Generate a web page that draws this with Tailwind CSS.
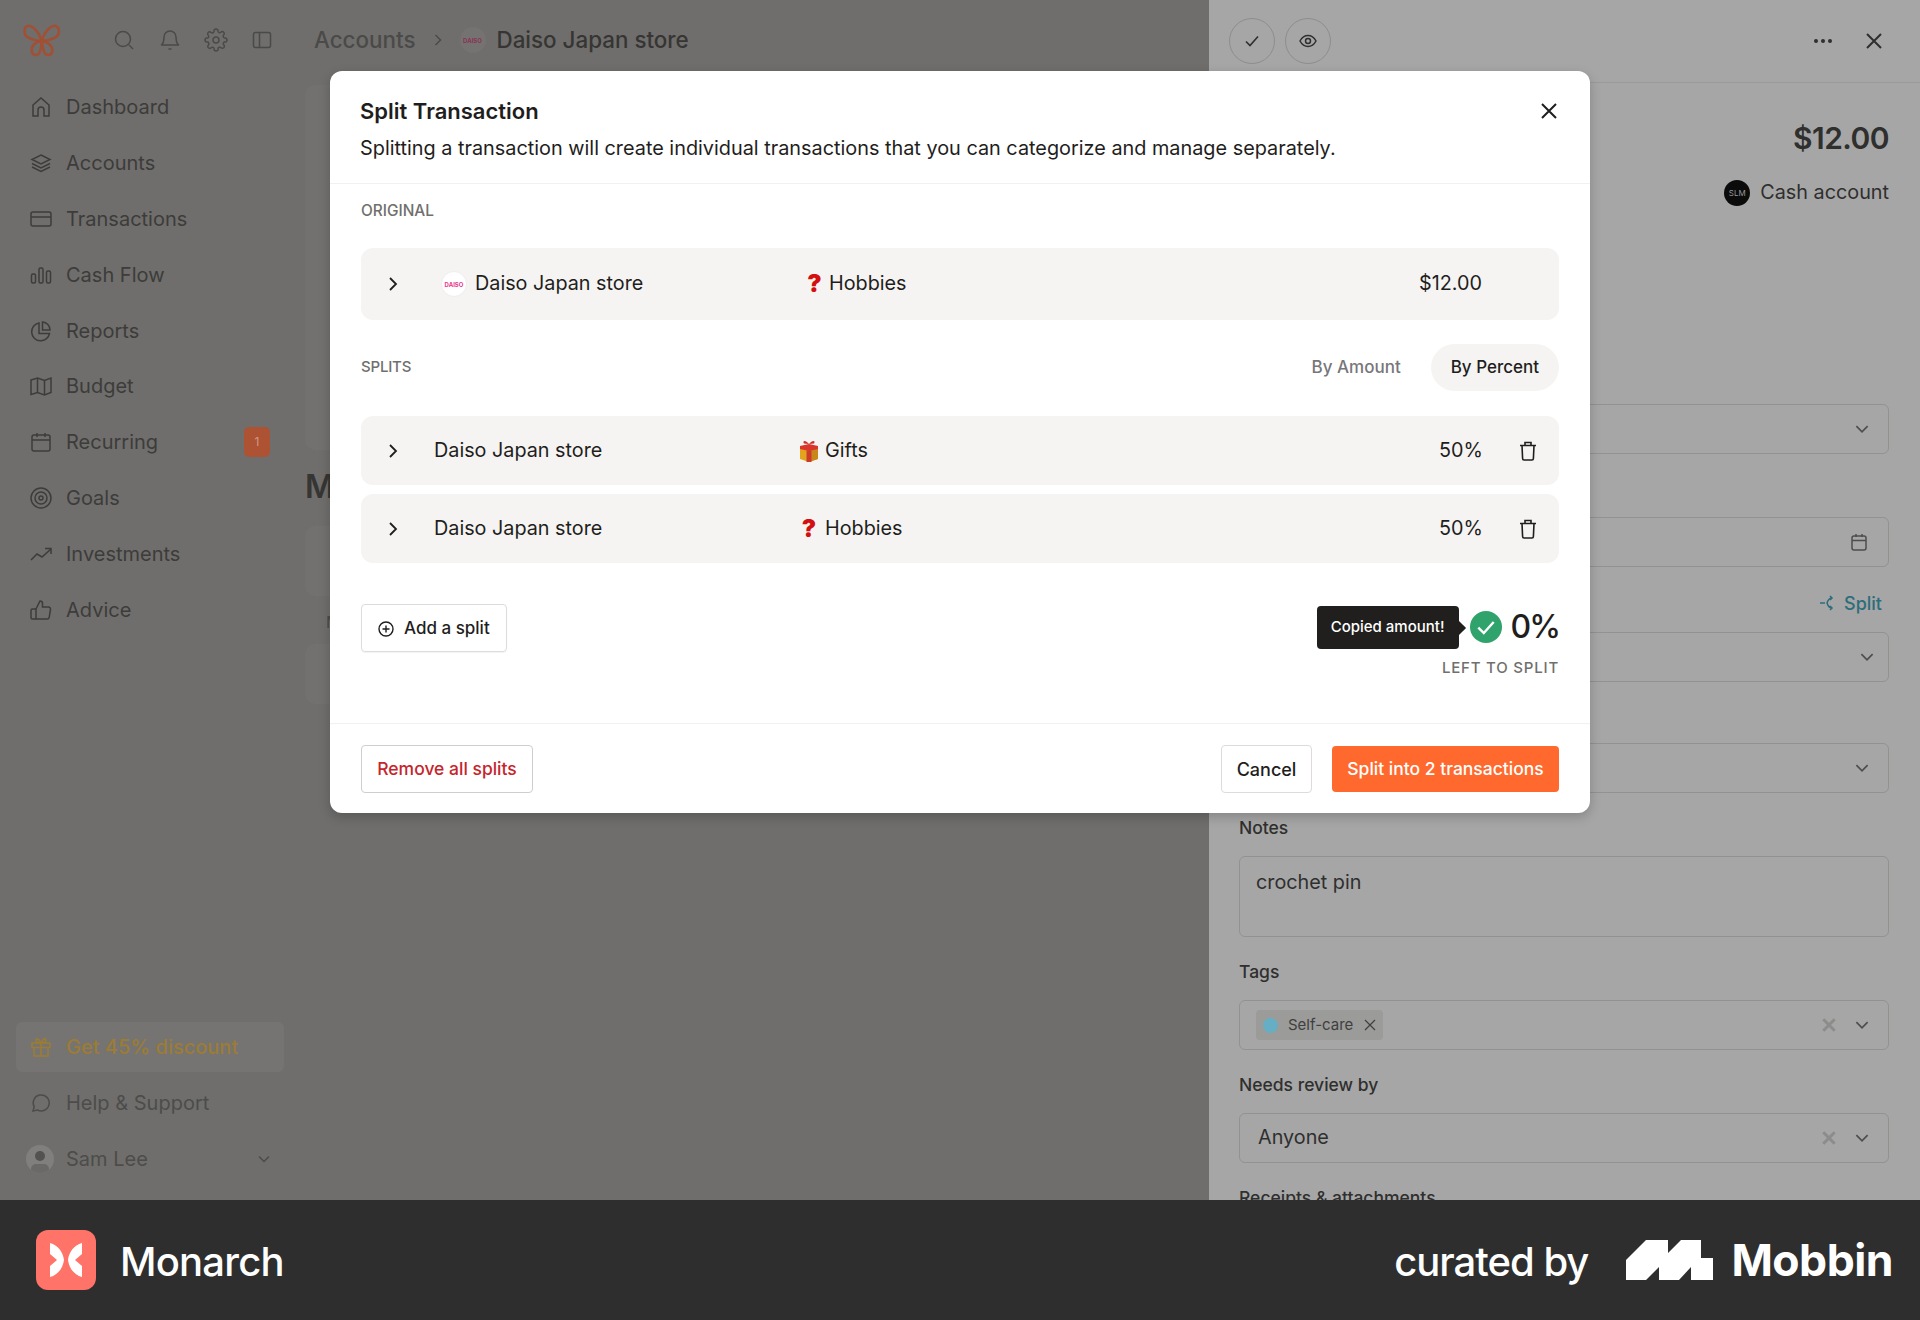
<!DOCTYPE html>
<html lang="en">
<head>
  <meta charset="UTF-8">
  <title>Monarch - Split Transaction</title>
  <script src="https://cdn.jsdelivr.net/npm/@tailwindcss/browser@4"></script>
</head>
<body class="m-0 bg-[#2e2e2e] font-['Inter',sans-serif]">
<div class="relative w-[1920px] h-[1320px] overflow-hidden">

  <!-- App behind the dialog -->
  <div class="flex h-[1200px] overflow-hidden bg-[#6f6e6c]">

    <!-- Sidebar -->
    <aside class="w-[305px] shrink-0 flex flex-col text-[20px] text-[#3d3c3a]">
      <div class="h-[79px] flex items-center pl-[15px]">
        <svg class="w-[55px] h-[50px]" viewBox="0 0 165 150" fill="none" stroke="#a24f33" stroke-width="7.500">
          <path d="M80 78C70 45 50 30 38 33C25 37 25 60 40 68C55 76 70 78 80 78C90 45 110 30 122 33C135 37 135 60 120 68C105 76 90 78 80 78Z"/>
          <path d="M80 78C60 80 48 95 50 108C52 122 68 125 74 112C78 102 80 90 80 78C82 90 84 102 88 112C94 125 110 122 112 108C114 95 100 80 80 78Z"/>
        </svg>
        <div class="flex items-center ml-[42px] gap-[22px] text-[#4a4a48]">
          <svg class="w-[24px] h-[24px]" viewBox="0 0 24 24" fill="none" stroke="currentColor" stroke-width="1.500"><circle cx="11" cy="11" r="7.500"/><path d="M17 17l4 4"/></svg>
          <svg class="w-[24px] h-[24px]" viewBox="0 0 24 24" fill="none" stroke="currentColor" stroke-width="1.500"><path d="M6 9a6 6 0 0 1 12 0c0 7 3 8 3 8H3s3-1 3-8"/><path d="M10.500 21h3"/></svg>
          <svg class="w-[24px] h-[24px]" viewBox="0 0 24 24" fill="none" stroke="currentColor" stroke-width="1.500"><circle cx="12" cy="12" r="3"/><path d="M19.400 15a1.650 1.650 0 0 0 .33 1.820l.06.06a2 2 0 1 1-2.830 2.830l-.06-.06a1.650 1.650 0 0 0-2.820 1.170V21a2 2 0 0 1-4 0v-.09a1.650 1.650 0 0 0-2.800-1.170l-.06.06a2 2 0 1 1-2.830-2.830l.06-.06a1.650 1.650 0 0 0-1.170-2.800H3a2 2 0 0 1 0-4h.09a1.650 1.650 0 0 0 1.170-2.800l-.06-.06a2 2 0 1 1 2.830-2.830l.06.06a1.650 1.650 0 0 0 1.820.33H9a1.650 1.650 0 0 0 1-1.510V3a2 2 0 0 1 4 0v.09a1.650 1.650 0 0 0 2.800 1.170l.06-.06a2 2 0 1 1 2.830 2.830l-.06.06a1.650 1.650 0 0 0-.33 1.820V9a1.650 1.650 0 0 0 1.510 1H21a2 2 0 0 1 0 4h-.09a1.650 1.650 0 0 0-1.510 1Z"/></svg>
          <svg class="w-[24px] h-[24px]" viewBox="0 0 24 24" fill="none" stroke="currentColor" stroke-width="1.500"><rect x="3.500" y="4.500" width="17" height="15" rx="2"/><path d="M9.500 4.500v15"/></svg>
        </div>
      </div>

      <nav class="flex flex-col pl-[29px] pr-[35px]">
        <a class="h-[55.900px] flex items-center gap-[13px]">
          <svg class="w-[24px] h-[24px]" viewBox="0 0 24 24" fill="none" stroke="currentColor" stroke-width="1.500"><path d="M4 21V10l8-7 8 7v11h-5v-6a3 3 0 0 0-6 0v6H4Z"/></svg>
          Dashboard
        </a>
        <a class="h-[55.900px] flex items-center gap-[13px]">
          <svg class="w-[24px] h-[24px]" viewBox="0 0 24 24" fill="none" stroke="currentColor" stroke-width="1.500"><path d="M12 4l9 4.500-9 4.500-9-4.500L12 4Z"/><path d="M3 12.500l9 4.500 9-4.500"/><path d="M3 16l9 4.500 9-4.500"/></svg>
          Accounts
        </a>
        <a class="h-[55.900px] flex items-center gap-[13px]">
          <svg class="w-[24px] h-[24px]" viewBox="0 0 24 24" fill="none" stroke="currentColor" stroke-width="1.500"><rect x="2" y="5" width="20" height="14" rx="2"/><path d="M2 10h20"/></svg>
          Transactions
        </a>
        <a class="h-[55.900px] flex items-center gap-[13px]">
          <svg class="w-[24px] h-[24px]" viewBox="0 0 24 24" fill="none" stroke="currentColor" stroke-width="1.500"><rect x="2.500" y="11" width="4" height="9" rx="1.500"/><rect x="10" y="5" width="4" height="15" rx="1.500"/><rect x="17.500" y="8" width="4" height="12" rx="1.500"/></svg>
          Cash Flow
        </a>
        <a class="h-[55.900px] flex items-center gap-[13px]">
          <svg class="w-[24px] h-[24px]" viewBox="0 0 24 24" fill="none" stroke="currentColor" stroke-width="1.500"><path d="M10 4a9 9 0 1 0 10.500 10.500H10V4Z"/><path d="M13.500 3a8 8 0 0 1 7.500 8h-7.500V3Z"/></svg>
          Reports
        </a>
        <a class="h-[55.900px] flex items-center gap-[13px]">
          <svg class="w-[24px] h-[24px]" viewBox="0 0 24 24" fill="none" stroke="currentColor" stroke-width="1.500"><path d="M2 6l6.500-2 7 2.500L22 4v14.500L15.500 21l-7-2.500L2 20.500V6Z"/><path d="M8.500 4v14.500M15.500 6.500V21"/></svg>
          Budget
        </a>
        <a class="h-[55.900px] flex items-center gap-[13px]">
          <svg class="w-[24px] h-[24px]" viewBox="0 0 24 24" fill="none" stroke="currentColor" stroke-width="1.500"><rect x="3" y="5" width="18" height="16" rx="2"/><path d="M3 10h18M8 3v4M16 3v4"/></svg>
          <span class="flex-1">Recurring</span>
          <span class="w-[26px] h-[30px] rounded-[5px] bg-[#ad5233] text-[#cf9a85] text-[12px] flex items-center justify-center">1</span>
        </a>
        <a class="h-[55.900px] flex items-center gap-[13px]">
          <svg class="w-[24px] h-[24px]" viewBox="0 0 24 24" fill="none" stroke="currentColor" stroke-width="1.500"><circle cx="12" cy="12" r="10"/><circle cx="12" cy="12" r="6"/><circle cx="12" cy="12" r="2"/></svg>
          Goals
        </a>
        <a class="h-[55.900px] flex items-center gap-[13px]">
          <svg class="w-[24px] h-[24px]" viewBox="0 0 24 24" fill="none" stroke="currentColor" stroke-width="1.500"><path d="M2 18l6-6 5 3 9-8"/><path d="M16 6.500h6V12"/></svg>
          Investments
        </a>
        <a class="h-[55.900px] flex items-center gap-[13px]">
          <svg class="w-[24px] h-[24px]" viewBox="0 0 24 24" fill="none" stroke="currentColor" stroke-width="1.500"><path d="M7 11l4-8a2.500 2.500 0 0 1 2.500 2.500V9h6a2 2 0 0 1 2 2.300l-1.300 8a2 2 0 0 1-2 1.700H7V11Z"/><path d="M7 11H3.500a1.500 1.500 0 0 0-1.500 1.500v7A1.500 1.500 0 0 0 3.500 21H7"/></svg>
          Advice
        </a>
      </nav>

      <div class="mt-auto pb-[16px] flex flex-col">
        <a class="ml-[16px] mr-[21px] pl-[13px] h-[50px] rounded-[6px] bg-[#757472] text-[#9c7c35] font-medium flex items-center gap-[13px]">
          <svg class="w-[24px] h-[24px]" viewBox="0 0 24 24" fill="none" stroke="currentColor" stroke-width="1.500"><rect x="3" y="8" width="18" height="4.500"/><path d="M5 12.500V21h14v-8.500M12 8v13"/><path d="M12 8C9 8 7 6.500 7 4.800S9.500 2.500 12 8c2.500-5.500 5-4.900 5-3.200S15 8 12 8Z"/></svg>
          Get 45% discount
        </a>
        <a class="mt-[6px] pl-[29px] h-[50px] text-[#4d4c4a] flex items-center gap-[13px]">
          <svg class="w-[24px] h-[24px]" viewBox="0 0 24 24" fill="none" stroke="currentColor" stroke-width="1.500"><path d="M4 20l1.200-4.200A8 8 0 1 1 8.500 19L4 20Z"/></svg>
          Help &amp; Support
        </a>
        <div class="mt-[6px] pl-[26px] pr-[33px] h-[50px] text-[#4d4c4a] flex items-center">
          <span class="relative w-[28px] h-[28px] rounded-full bg-[#807f7d] overflow-hidden mr-[12px]">
            <span class="absolute left-[9px] top-[6px] w-[10px] h-[10px] rounded-full bg-[#535250]"></span>
            <span class="absolute left-[5px] top-[19px] w-[18px] h-[10px] rounded-full bg-[#6a6967]"></span>
          </span>
          <span class="flex-1">Sam Lee</span>
          <svg class="w-[16px] h-[16px]" viewBox="0 0 16 16" fill="none" stroke="currentColor" stroke-width="1.500"><path d="M3 5.500l5 5 5-5"/></svg>
        </div>
      </div>
    </aside>

    <!-- Main column, mostly covered by the dialog -->
    <main class="w-[904px] shrink-0 flex flex-col relative">
      <div class="h-[80px] flex items-center pl-[9px] text-[22.400px] font-medium text-[#4a4a48]">
        Accounts
        <svg class="w-[16px] h-[16px] mx-[14px]" viewBox="0 0 16 16" fill="none" stroke="currentColor" stroke-width="1.500"><path d="M5.500 3l5 5-5 5"/></svg>
        <span class="w-[26px] h-[26px] rounded-full bg-[#747371] mr-[11px] flex items-center justify-center text-[6px] font-bold text-[#8a3355]">DAISO</span>
        <span class="text-[#363533]">Daiso Japan store</span>
      </div>
      <div class="h-[365px] mt-[5px] rounded-[10px] bg-[#72716f]"></div>
      <div class="mt-[17px] text-[32px] leading-[40px] font-semibold text-[#363533]">M</div>
      <div class="mt-[19px] h-[70px] rounded-[10px] bg-[#72716f]"></div>
      <div class="mt-[14px] ml-[21px] text-[16px] text-[#4a4a48]">M</div>
      <div class="mt-[10px] h-[60px] rounded-[10px] bg-[#72716f]"></div>
    </main>

    <!-- Transaction drawer -->
    <section class="flex-1 bg-[#a6a6a6] text-[#2f2f2e] text-[19.800px] flex flex-col">
      <div class="h-[83px] shrink-0 border-b border-[#9a9a99] flex items-center pl-[20px] pr-[34px]">
        <span class="w-[46px] h-[46px] rounded-full border border-[#8d8d8c] flex items-center justify-center">
          <svg class="w-[20px] h-[20px]" viewBox="0 0 20 20" fill="none" stroke="currentColor" stroke-width="1.600"><path d="M4 10.500l4 4 8-9"/></svg>
        </span>
        <span class="ml-[10px] w-[46px] h-[46px] rounded-full border border-[#8d8d8c] flex items-center justify-center">
          <svg class="w-[20px] h-[20px]" viewBox="0 0 20 20" fill="none" stroke="currentColor" stroke-width="1.500"><path d="M2 10s3-5.500 8-5.500 8 5.500 8 5.500-3 5.500-8 5.500S2 10 2 10Z"/><circle cx="10" cy="10" r="2.500"/></svg>
        </span>
        <svg class="ml-auto w-[24px] h-[24px]" viewBox="0 0 24 24" fill="currentColor"><circle cx="5" cy="12" r="2"/><circle cx="12" cy="12" r="2"/><circle cx="19" cy="12" r="2"/></svg>
        <svg class="ml-[27px] w-[24px] h-[24px]" viewBox="0 0 24 24" fill="none" stroke="currentColor" stroke-width="2"><path d="M5 5l14 14M19 5L5 19"/></svg>
      </div>

      <div class="pl-[30px] pr-[31px] flex flex-col">
        <div class="mt-[35px] text-right text-[30px] tracking-[-0.550px] leading-[40px] font-semibold">$12.00</div>
        <div class="mt-[19px] h-[32px] flex items-center justify-end gap-[10px]">
          <span class="w-[26px] h-[26px] rounded-full bg-[#0b0b0b] text-[#999] text-[8px] flex items-center justify-center">SLM</span>
          Cash account
        </div>
        <div class="mt-[195px] h-[50px] rounded-[6px] border border-[#929291] flex items-center justify-end pr-[17px]">
          <svg class="w-[18px] h-[18px]" viewBox="0 0 16 16" fill="none" stroke="#4d4d4c" stroke-width="1.500"><path d="M3 5.500l5 5 5-5"/></svg>
        </div>
        <div class="mt-[63px] h-[50px] rounded-[6px] border border-[#929291] flex items-center justify-end pr-[19px]">
          <svg class="w-[20px] h-[20px]" viewBox="0 0 20 20" fill="none" stroke="#4d4d4c" stroke-width="1.500"><rect x="3" y="4" width="14" height="14" rx="2"/><path d="M3 8.500h14M7 2v3M13 2v3"/></svg>
        </div>
        <div class="mt-[21px] h-[30px] flex items-center justify-end pr-[7px] gap-[9px] text-[18px] font-medium text-[#2d6d7c]">
          <svg class="w-[16px] h-[16px]" viewBox="0 0 16 16" fill="none" stroke="currentColor" stroke-width="1.500"><path d="M1 8h5M13 3c-3 0-4 2-5 5 1 3 2 5 5 5M11 1l2 2-2 2M11 11l2 2-2 2"/></svg>
          Split
        </div>
        <div class="mt-[14px] h-[50px] rounded-[6px] border border-[#929291] flex items-center justify-end pr-[12px]">
          <svg class="w-[18px] h-[18px]" viewBox="0 0 16 16" fill="none" stroke="#4d4d4c" stroke-width="1.500"><path d="M3 5.500l5 5 5-5"/></svg>
        </div>
        <div class="mt-[61px] h-[50px] rounded-[6px] border border-[#929291] flex items-center justify-end pr-[17px]">
          <svg class="w-[18px] h-[18px]" viewBox="0 0 16 16" fill="none" stroke="#4d4d4c" stroke-width="1.500"><path d="M3 5.500l5 5 5-5"/></svg>
        </div>
        <div class="mt-[24px] text-[17.500px] leading-[22px] font-medium">Notes</div>
        <div class="mt-[17px] h-[81px] rounded-[6px] border border-[#929291] px-[16px] pt-[11px] leading-[28px]">crochet pin</div>
        <div class="mt-[24px] text-[17.500px] leading-[22px] font-medium">Tags</div>
        <div class="mt-[17px] h-[50px] rounded-[6px] border border-[#929291] flex items-center pl-[16px] pr-[17px]">
          <span class="h-[30px] rounded-[4px] bg-[#9b9b9a] pl-[7px] pr-[6px] flex items-center text-[15px] text-[#403f3e]">
            <span class="w-[15px] h-[15px] rounded-full bg-[#66aec4] mr-[10px]"></span>
            Self-care
            <svg class="ml-[10px] w-[14px] h-[14px]" viewBox="0 0 14 14" fill="none" stroke="currentColor" stroke-width="1.200"><path d="M2 2l10 10M12 2L2 12"/></svg>
          </span>
          <svg class="ml-auto w-[16px] h-[16px]" viewBox="0 0 14 14" fill="none" stroke="#8c8c8b" stroke-width="2.600"><path d="M2 2l10 10M12 2L2 12"/></svg>
          <svg class="ml-[16px] w-[18px] h-[18px]" viewBox="0 0 16 16" fill="none" stroke="#4d4d4c" stroke-width="1.500"><path d="M3 5.500l5 5 5-5"/></svg>
        </div>
        <div class="mt-[24px] text-[17.500px] leading-[22px] font-medium">Needs review by</div>
        <div class="mt-[17px] h-[50px] rounded-[6px] border border-[#929291] flex items-center pl-[18px] pr-[17px]">
          Anyone
          <svg class="ml-auto w-[16px] h-[16px]" viewBox="0 0 14 14" fill="none" stroke="#8c8c8b" stroke-width="2.600"><path d="M2 2l10 10M12 2L2 12"/></svg>
          <svg class="ml-[16px] w-[18px] h-[18px]" viewBox="0 0 16 16" fill="none" stroke="#4d4d4c" stroke-width="1.500"><path d="M3 5.500l5 5 5-5"/></svg>
        </div>
        <div class="mt-[24px] text-[17.500px] leading-[22px] font-medium whitespace-nowrap">Receipts &amp; attachments</div>
      </div>
    </section>
  </div>

  <!-- Dialog -->
  <div class="absolute left-[330px] top-[71px] w-[1260px] h-[742px] rounded-[12px] bg-white shadow-[0_4px_12px_rgba(0,0,0,0.2)] text-[#1f1e1d] flex flex-col">
    <header class="relative h-[113px] shrink-0 border-b border-[#f2f1ef] px-[30px] pt-[26px]">
      <h2 class="text-[22px] leading-[28px] font-semibold">Split Transaction</h2>
      <p class="mt-[9px] text-[19.850px] leading-[28px]">Splitting a transaction will create individual transactions that you can categorize and manage separately.</p>
      <svg class="absolute right-[29px] top-[28px] w-[24px] h-[24px]" viewBox="0 0 24 24" fill="none" stroke="currentColor" stroke-width="2"><path d="M5 5l14 14M19 5L5 19"/></svg>
    </header>

    <div class="flex-1 px-[31px] flex flex-col">
      <div class="mt-[18px] h-[18px] leading-[18px] text-[15.400px] font-medium text-[#706f6d]">ORIGINAL</div>
      <div class="mt-[28px] h-[72px] rounded-[12px] bg-[#f5f4f2] flex items-center text-[19.800px]">
        <svg class="ml-[22px] w-[20px] h-[20px]" viewBox="0 0 20 20" fill="none" stroke="currentColor" stroke-width="1.800"><path d="M7 4l6 6-6 6"/></svg>
        <span class="ml-[38px] w-[26px] h-[26px] rounded-full bg-white border border-[#eee] flex items-center justify-center text-[6px] font-bold text-[#e8388a]">DAISO</span>
        <span class="ml-[8px] w-[332px]">Daiso Japan store</span>
        <span class="w-[15px] text-[24px] leading-none text-[#d40f0f] font-black text-center">?</span>
        <span class="ml-[7px]">Hobbies</span>
        <span class="ml-auto mr-[77px]">$12.00</span>
      </div>

      <div class="mt-[24px] h-[47px] flex items-center">
        <span class="text-[15px] tracking-[-0.200px] font-medium text-[#706f6d]">SPLITS</span>
        <span class="ml-auto text-[17px] font-medium text-[#77767a]">By Amount</span>
        <span class="ml-[30px] h-[47px] px-[20px] rounded-full bg-[#f5f4f2] flex items-center text-[17px] font-medium">By Percent</span>
      </div>

      <div class="mt-[25px] flex flex-col gap-[9px] text-[19.800px]">
        <div class="h-[69px] rounded-[12px] bg-[#f5f4f2] flex items-center">
          <svg class="ml-[22px] w-[20px] h-[20px]" viewBox="0 0 20 20" fill="none" stroke="currentColor" stroke-width="1.800"><path d="M7 4l6 6-6 6"/></svg>
          <span class="ml-[31px] w-[365px]">Daiso Japan store</span>
          <svg class="w-[20px] h-[22px]" viewBox="0 0 20 22"><path d="M1 7l9 2 9-2v12l-9 3-9-3Z" fill="#e2a31e"/><path d="M10 9l9-2v12l-9 3Z" fill="#c9861a"/><path d="M1 6l9-2 9 2v3l-9 2-9-2Z" fill="#d9352b"/><path d="M7.500 10.500h5V22h-5Z" fill="#cc3a2a"/><path d="M10 4C7 0 3 0 5 3.500ZM10 4c3-4 7-4 5-.5Z" fill="#c92f2a"/></svg>
          <span class="ml-[6px]">Gifts</span>
          <span class="ml-auto">50%</span>
          <svg class="ml-[33px] mr-[19px] w-[24px] h-[24px]" viewBox="0 0 24 24" fill="none" stroke="currentColor" stroke-width="1.600"><path d="M4 6.500h16M9 6.500V3.500h6v3M6 6.500l.6 13a1.500 1.500 0 0 0 1.500 1.500h7.800a1.500 1.500 0 0 0 1.500-1.500l.6-13"/></svg>
        </div>
        <div class="h-[69px] rounded-[12px] bg-[#f5f4f2] flex items-center">
          <svg class="ml-[22px] w-[20px] h-[20px]" viewBox="0 0 20 20" fill="none" stroke="currentColor" stroke-width="1.800"><path d="M7 4l6 6-6 6"/></svg>
          <span class="ml-[31px] w-[365px]">Daiso Japan store</span>
          <span class="w-[20px] text-[24px] leading-none text-[#d40f0f] font-black text-center">?</span>
          <span class="ml-[6px]">Hobbies</span>
          <span class="ml-auto">50%</span>
          <svg class="ml-[33px] mr-[19px] w-[24px] h-[24px]" viewBox="0 0 24 24" fill="none" stroke="currentColor" stroke-width="1.600"><path d="M4 6.500h16M9 6.500V3.500h6v3M6 6.500l.6 13a1.500 1.500 0 0 0 1.500 1.500h7.800a1.500 1.500 0 0 0 1.500-1.500l.6-13"/></svg>
        </div>
      </div>

      <div class="mt-[41px] flex items-start">
        <button class="h-[48px] w-[146px] rounded-[4px] border border-[#dddcda] flex items-center pl-[15px] pt-[1px] gap-[9px] text-[17px] font-medium shadow-[0_1px_1px_rgba(0,0,0,0.05)]">
          <svg class="w-[18px] h-[18px]" viewBox="0 0 18 18" fill="none" stroke="currentColor" stroke-width="1.400"><circle cx="9" cy="9" r="7"/><path d="M9 5.500v7M5.500 9h7"/></svg>
          Add a split
        </button>
        <div class="ml-auto flex flex-col items-end">
          <div class="h-[46px] flex items-center">
            <span class="relative h-[43px] w-[142px] rounded-[4px] bg-[#211f1d] text-white text-[15px] font-medium flex items-center justify-center">
              Copied amount!
              <span class="absolute -right-[5px] top-[17px] w-[10px] h-[10px] rotate-45 bg-[#211f1d]"></span>
            </span>
            <span class="ml-[11px] w-[32px] h-[32px] rounded-full bg-[#2fa36b] flex items-center justify-center">
              <svg class="w-[22px] h-[22px]" viewBox="0 0 20 20" fill="none" stroke="white" stroke-width="2.200"><path d="M3 10.500l5 5 9-10"/></svg>
            </span>
            <span class="ml-[9px] text-[32px] tracking-[-2px] font-medium">0%</span>
          </div>
          <span class="mt-[9px] text-[15px] leading-[18px] font-medium tracking-[0.800px] text-[#706f6d]">LEFT TO SPLIT</span>
        </div>
      </div>
    </div>

    <footer class="h-[90px] shrink-0 border-t border-[#f2f1ef] px-[31px] flex items-center gap-[20px] text-[17.500px] font-medium">
      <button class="h-[48px] w-[172px] pt-[1px] rounded-[4px] border border-[#cfcecc] text-[#c6252c]">Remove all splits</button>
      <button class="ml-auto h-[48px] w-[91px] pt-[1px] rounded-[4px] border border-[#dddcda] text-[18px]">Cancel</button>
      <button class="h-[46px] w-[227px] pt-[1px] rounded-[4px] bg-[#ff692d] text-white">Split into 2 transactions</button>
    </footer>
  </div>

  <!-- Mobbin credit bar -->
  <div class="h-[120px] bg-[#2e2e2e] flex items-center pl-[36px] pr-[27px] text-white">
    <span class="w-[60px] h-[60px] rounded-[12px] bg-[#ff7369] flex items-center justify-center">
      <svg class="w-[60px] h-[60px]" viewBox="0 0 60 60" fill="white"><path d="M14 13C22 15 27 22 28 30C27 38 22 45 14 47V36L21 30L14 24Z"/><path d="M46 13C38 15 33 22 32 30C33 38 38 45 46 47V36L39 30L46 24Z"/></svg>
    </span>
    <span class="ml-[24px] mt-[4px] text-[40px] font-medium tracking-[-0.800px]">Monarch</span>
    <span class="ml-auto mt-[4px] text-[40px] font-medium tracking-[-1px]">curated by</span>
    <svg class="ml-[38px] w-[87px] h-[40px]" viewBox="0 0 87 40" fill="white"><path d="M0 40V20L20 0H42V13L55 0H75V18H87V40H65V27L53 40H33V27L20 40Z"/></svg>
    <span class="ml-[18px] text-[44.500px] font-bold tracking-[-0.500px]">Mobbin</span>
  </div>
</div>
</body>
</html>
